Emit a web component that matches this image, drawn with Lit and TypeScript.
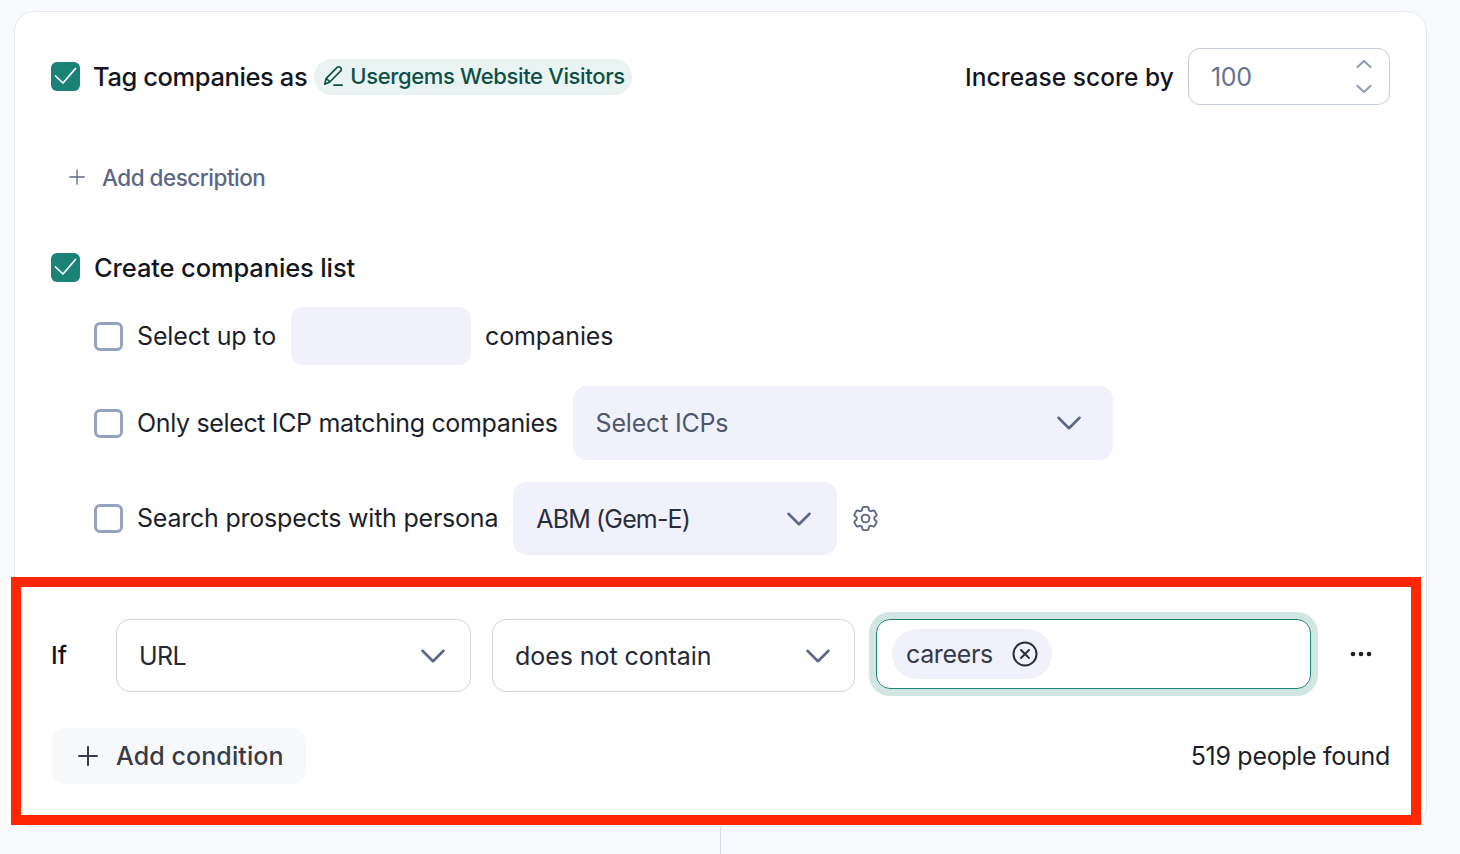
import { LitElement, html, css } from "lit";
import { customElement } from "lit/decorators.js";

const chev = html`<svg class="chev" viewBox="0 0 24 24" width="28" height="28" fill="none" stroke="#5b6785" stroke-width="2.2" stroke-linecap="round" stroke-linejoin="round"><path d="M3 7.5 12 16.5 21 7.5"/></svg>`;
const tick = html`<span class="cb on"><svg viewBox="0 0 29 29" width="29" height="29" fill="none" stroke="#fff" stroke-width="1.7" stroke-linecap="round" stroke-linejoin="round"><path d="M4.5 14l7.5 7L24.5 6.5"/></svg></span>`;
const plus = (s: number, c: string, w: number) => html`<svg viewBox="0 0 20 20" width="${s}" height="${s}" fill="none" stroke="${c}" stroke-width="${w}" stroke-linecap="round"><path d="M10 1v18M1 10h18"/></svg>`;

@customElement("app-root")
export class AppRoot extends LitElement {
  static styles = css`
    :host { display: flex; flex-direction: column; position: relative; width: 1460px; height: 854px; overflow: hidden; background: #f8f9fd; font-family: Inter, "Liberation Sans", sans-serif; color: #14161f; }
    * { box-sizing: border-box; }
    .card { margin: 11px 0 0 14px; width: 1413px; height: 816px; flex: none; background: #fff; border: 1px solid #e5e8f1; border-radius: 20px; padding: 36px 36px 0 36px; display: flex; flex-direction: column; }
    .line { width: 1px; flex: 1; margin-left: 720px; background: #d9dde8; }
    .row { display: flex; align-items: center; }
    .cb { width: 29px; height: 29px; flex: none; border-radius: 6px; border: 3px solid #96a3bf; display: block; }
    .cb.on { background: #1c8277; border: 0; }
    .cb svg { display: block; }
    .r1 { height: 57px; justify-content: space-between; }
    .left, .right { display: flex; align-items: center; }
    .title { margin-left: 13px; font-size: 25.5px; font-weight: 500; letter-spacing: -0.4px; white-space: nowrap; }
    .title.list { letter-spacing: -0.13px; margin-left: 14px; padding-bottom: 1px; }
    .pill { margin-left: 7px; height: 36px; width: 318px; border-radius: 18px; background: #e9f3f1; color: #0f4f47; display: flex; align-items: center; padding: 0 0 2px 8px; font-size: 22px; font-weight: 500; letter-spacing: -0.35px; white-space: nowrap; gap: 6px; }
    .score { font-size: 24.5px; font-weight: 500; letter-spacing: 0.05px; margin-right: 14px; white-space: nowrap; }
    .num { width: 202px; height: 57px; border: 1px solid #c5cde2; border-radius: 12px; display: flex; align-items: center; justify-content: space-between; padding: 0 17px 0 22px; font-size: 25px; color: #66728f; letter-spacing: -0.4px; }
    .spin { display: flex; flex-direction: column; gap: 15px; }
    .spin svg { display: block; }
    .desc { margin: 57px 0 0 18px; height: 30px; gap: 17px; color: #5b6785; font-size: 22.5px; font-weight: 500; letter-spacing: -0.5px; }
    .r3 { margin-top: 61px; height: 29px; }
    .opt { margin-left: 43px; }
    .opt .txt { margin-left: 14px; margin-right: 15px; font-size: 25px; white-space: nowrap; color: #1c1f2a; }
    .opt .upto { letter-spacing: -0.15px; }
    .opt .comp { letter-spacing: -0.1px; }
    .opt .only { letter-spacing: -0.35px; }
    .opt .search { letter-spacing: -0.22px; padding-bottom: 1px; }
    .r4 { margin-top: 25px; height: 58px; }
    .blank { width: 180px; height: 58px; border-radius: 12px; background: #f0f1fa; }
    .r5 { margin-top: 21px; height: 74px; }
    .r6 { margin-top: 22px; height: 73px; }
    .sel { display: flex; align-items: center; justify-content: space-between; height: 100%; border-radius: 14px; padding: 0 30px 0 23px; font-size: 25px; letter-spacing: -0.05px; color: #2a2e3b; white-space: nowrap; }
    .sel.fill { background: #f0f1fa; }
    .sel.muted { color: #4f576b; letter-spacing: -0.2px; }
    .w540 { width: 540px; }
    .w324 { width: 324px; padding-right: 24px; letter-spacing: -0.85px; }
    .gear { margin-left: 13px; display: block; flex: none; }
    .r7 { margin-top: 64px; height: 73px; align-items: flex-start; }
    .if { width: 65px; font-size: 24.5px; font-weight: 500; height: 72px; display: flex; align-items: center; }
    .sel.out { border: 1px solid #cdd3e4; background: #fff; padding: 0 23px 0 22px; color: #252936; }
    .w355 { width: 355px; letter-spacing: -0.6px; }
    .w363 { width: 363px; margin-left: 21px; }
    .sel.out.w363 { padding-right: 22px; }
    .val { margin-left: 21px; width: 435px; height: 70px; border: 1px solid #1c8277; border-radius: 14px; box-shadow: 0 0 0 7px #d1e6e2; display: flex; align-items: center; padding-left: 15px; }
    .chip { height: 50px; width: 160px; border-radius: 25px; background: #f0f1fa; display: flex; align-items: center; padding-left: 14px; gap: 19px; font-size: 25px; letter-spacing: -0.35px; color: #353a48; }
    .chip svg { display: block; }
    .dots { margin: 32px 0 0 39px; display: block; }
    .r8 { margin-top: 36px; height: 56px; justify-content: space-between; }
    .add { width: 255px; height: 56px; background: #f7f8f9; border-radius: 14px; display: flex; align-items: center; padding-left: 27px; gap: 18px; font-size: 25px; font-weight: 500; letter-spacing: 0.1px; color: #383c48; }
    .add svg { display: block; }
    .found { font-size: 25px; letter-spacing: -0.3px; color: #1c1f2a; white-space: nowrap; }
    .frame { position: absolute; left: 11px; top: 577px; width: 1410px; height: 248px; border: 10px solid #ff2600; pointer-events: none; }
  `;

  render() {
    return html`
      <div class="card">
        <div class="row r1">
          <div class="left">
            ${tick}
            <span class="title">Tag companies as</span>
            <span class="pill">
              <svg viewBox="0 0 24 24" width="22" height="22" fill="none" stroke="#0f4f47" stroke-width="1.8" stroke-linecap="round" stroke-linejoin="round"><path d="M3 21l1.6-6.5L16.5 2.6a2.4 2.4 0 0 1 3.4 0l.5.5a2.4 2.4 0 0 1 0 3.4L8.5 18.5 3 21zM4.8 14.5l3.7 4M13 22h9"/></svg>
              Usergems Website Visitors
            </span>
          </div>
          <div class="right">
            <span class="score">Increase score by</span>
            <div class="num">
              100
              <span class="spin">
                <svg viewBox="0 0 16 10" width="16" height="10" fill="none" stroke="#929db6" stroke-width="2.2" stroke-linecap="round" stroke-linejoin="round"><path d="M1.5 8 8 2l6.5 6"/></svg>
                <svg viewBox="0 0 16 10" width="16" height="10" fill="none" stroke="#929db6" stroke-width="2.2" stroke-linecap="round" stroke-linejoin="round"><path d="M1.5 2 8 8l6.5-6"/></svg>
              </span>
            </div>
          </div>
        </div>

        <div class="row desc">${plus(16, "#5b6785", 1.6)}<span>Add description</span></div>

        <div class="row r3">${tick}<span class="title list">Create companies list</span></div>

        <div class="row opt r4"><span class="cb"></span><span class="txt upto">Select up to</span><div class="blank"></div><span class="txt comp">companies</span></div>
        <div class="row opt r5"><span class="cb"></span><span class="txt only">Only select ICP matching companies</span><div class="sel fill muted w540">Select ICPs ${chev}</div></div>
        <div class="row opt r6">
          <span class="cb"></span><span class="txt search">Search prospects with persona</span>
          <div class="sel fill w324">ABM (Gem-E) ${chev}</div>
          <svg class="gear" width="31" height="31" viewBox="0 0 24 24" fill="none" stroke="#5b6785" stroke-width="1.45" stroke-linecap="round" stroke-linejoin="round"><path d="M9.594 3.94c.09-.542.56-.94 1.11-.94h2.593c.55 0 1.02.398 1.11.94l.213 1.281c.063.374.313.686.645.87.074.04.147.083.22.127.324.196.72.257 1.075.124l1.217-.456a1.125 1.125 0 0 1 1.37.49l1.296 2.247a1.125 1.125 0 0 1-.26 1.431l-1.003.827c-.293.24-.438.613-.431.992a6.759 6.759 0 0 1 0 .255c-.007.378.138.75.43.99l1.005.828c.424.35.534.954.26 1.43l-1.298 2.247a1.125 1.125 0 0 1-1.369.491l-1.217-.456c-.355-.133-.75-.072-1.076.124a6.57 6.57 0 0 1-.22.128c-.331.183-.581.495-.644.869l-.213 1.28c-.09.543-.56.941-1.11.941h-2.594c-.55 0-1.02-.398-1.11-.94l-.213-1.281c-.062-.374-.312-.686-.644-.87a6.52 6.52 0 0 1-.22-.127c-.325-.196-.72-.257-1.076-.124l-1.217.456a1.125 1.125 0 0 1-1.369-.49l-1.297-2.247a1.125 1.125 0 0 1 .26-1.431l1.004-.827c.292-.24.437-.613.43-.992a6.932 6.932 0 0 1 0-.255c.007-.378-.138-.75-.43-.99l-1.004-.828a1.125 1.125 0 0 1-.26-1.43l1.297-2.247a1.125 1.125 0 0 1 1.37-.491l1.216.456c.356.133.751.072 1.076-.124.072-.044.146-.087.22-.128.332-.183.582-.495.644-.869l.214-1.281z"/><circle cx="12" cy="12" r="3"/></svg>
        </div>

        <div class="row r7">
          <span class="if">If</span>
          <div class="sel out w355">URL ${chev}</div>
          <div class="sel out w363">does not contain ${chev}</div>
          <div class="val">
            <div class="chip">careers
              <svg width="26" height="26" viewBox="0 0 26 26" fill="none" stroke="#2a2e3b" stroke-width="2" stroke-linecap="round"><circle cx="13" cy="13" r="11.5"/><path d="M9 9l8 8M17 9l-8 8"/></svg>
            </div>
          </div>
          <svg class="dots" width="22" height="6" viewBox="0 0 22 6" fill="#1c1f2a"><circle cx="3" cy="3" r="2.3"/><circle cx="11" cy="3" r="2.3"/><circle cx="19" cy="3" r="2.3"/></svg>
        </div>

        <div class="row r8">
          <div class="add">${plus(20, "#383c48", 2)}<span>Add condition</span></div>
          <span class="found">519 people found</span>
        </div>
      </div>
      <div class="line"></div>
      <div class="frame"></div>
    `;
  }
}
